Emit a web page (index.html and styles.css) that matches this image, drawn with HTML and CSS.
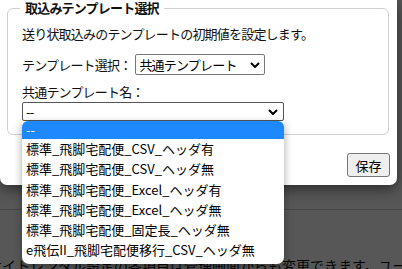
FILE: index.html
```html
<!DOCTYPE html>
<html lang="ja">
<head>
  <meta charset="UTF-8" />
  <meta name="viewport" content="width=device-width, initial-scale=1.0" />
  <title>取込みテンプレート選択</title>
  <link rel="stylesheet" href="styles.css">
</head>
<body>
  <!-- page behind the dialog -->
  <div class="page">
    <p class="page-line page-top">テンプレートの設定</p>
    <hr class="page-rule" />
    <p class="page-line page-bottom">サイトレンタル設定の各項目は管理画面からも変更できます。ユーザー</p>
  </div>
  <div class="overlay"></div>

  <div class="dialog">
    <fieldset class="group">
      <legend>取込みテンプレート選択</legend>
      <p class="note">送り状取込みのテンプレートの初期値を設定します。</p>

      <div class="row">
        <label for="tplType">テンプレート選択：</label>
        <span class="select-wrap">
          <select id="tplType" class="select">
            <option>共通テンプレート</option>
          </select>
          <svg class="chevron" viewBox="0 0 10 6" width="10" height="6"><path d="M1 1l4 4 4-4" fill="none" stroke="#000" stroke-width="2"/></svg>
        </span>
      </div>

      <label class="field-label" for="tplName">共通テンプレート名：</label>
      <span class="select-wrap wide">
        <select id="tplName" class="select">
          <option>--</option>
        </select>
        <svg class="chevron" viewBox="0 0 10 6" width="10" height="6"><path d="M1 1l4 4 4-4" fill="none" stroke="#000" stroke-width="2"/></svg>
      </span>
    </fieldset>

    <div class="actions">
      <button type="button" class="save-btn">保存</button>
    </div>
  </div>

  <!-- open list of the name select -->
  <ul class="dropdown">
    <li class="selected">--</li>
    <li>標準_飛脚宅配便_CSV_ヘッダ有</li>
    <li>標準_飛脚宅配便_CSV_ヘッダ無</li>
    <li>標準_飛脚宅配便_Excel_ヘッダ有</li>
    <li>標準_飛脚宅配便_Excel_ヘッダ無</li>
    <li>標準_飛脚宅配便_固定長_ヘッダ無</li>
    <li>e飛伝II_飛脚宅配便移行_CSV_ヘッダ無</li>
  </ul>
</body>
</html>
```

FILE: styles.css
```css
body {
  font-family: "Noto Sans CJK JP", "Noto Sans", sans-serif;
  font-size: 13px;
  margin: 0;
  width: 402px;
  height: 269px;
  overflow: hidden;
  position: relative;
  background: #fff;
  color: #111;
  letter-spacing: -0.8px;
}
.page {
  padding-top: 182px;
  height: 269px;
  box-sizing: border-box;
  overflow: hidden;
}
.page-line {
  margin: 0;
  white-space: nowrap;
  line-height: 18px;
}
.page-top {
  margin-left: -120px;
}
.page-rule {
  border: none;
  border-top: 1px solid #ccc;
  margin: 9px 0 0;
}
.page-bottom {
  margin-top: 46px;
  margin-left: -12px;
  font-size: 14px;
  letter-spacing: 0;
}
.overlay {
  position: absolute;
  inset: 0;
  background: rgba(0, 0, 0, 0.66);
}
.dialog {
  position: absolute;
  left: 0;
  top: 0;
  width: 397px;
  height: 185px;
  background: #fff;
  border-radius: 0 0 7px 7px;
  box-shadow: 0 4px 14px rgba(0, 0, 0, 0.5);
}
.group {
  margin: 0 8px 0 7px;
  padding: 9px 14px 13px;
  border: 1px solid #d0d0d0;
  border-radius: 6px;
}
.group legend {
  font-weight: bold;
  padding: 0 5px;
  margin-left: -2px;
  line-height: 16px;
}
.note {
  margin: 0 0 11px;
  line-height: 18px;
}
.row {
  display: flex;
  align-items: center;
  gap: 4px;
  margin-bottom: 9px;
}
.select-wrap {
  position: relative;
  display: inline-block;
}
.select-wrap.wide {
  display: block;
  width: 262px;
  margin-top: 2px;
}
.select {
  display: block;
  appearance: none;
  font: inherit;
  letter-spacing: inherit;
  color: #000;
  background: #fff;
  border: 1px solid #767676;
  border-radius: 2px;
  height: 21px;
  padding: 0 20px 0 3px;
  line-height: 19px;
  width: 130px;
}
.wide .select {
  width: 262px;
  height: 19px;
  line-height: 17px;
  border-color: #555;
}
.chevron {
  position: absolute;
  right: 5px;
  top: 8px;
  pointer-events: none;
}
.wide .chevron {
  top: 7px;
  right: 6px;
}
.field-label {
  display: block;
  line-height: 16px;
}
.actions {
  display: flex;
  justify-content: flex-end;
  padding: 18px 7px 0 0;
}
.save-btn {
  font: inherit;
  font-size: 13px;
  letter-spacing: 0;
  width: 43px;
  height: 24px;
  padding: 0;
  background: #efefef;
  border: 1px solid #767676;
  border-radius: 3px;
  color: #000;
}
.dropdown {
  position: absolute;
  left: 22px;
  top: 121px;
  width: 262px;
  height: 143px;
  box-sizing: border-box;
  margin: 0;
  padding: 0;
  list-style: none;
  background: #fff;
  border-radius: 0 0 7px 7px;
  box-shadow: 0 3px 8px rgba(0, 0, 0, 0.35);
  overflow: hidden;
  letter-spacing: 0;
}
.dropdown li {
  height: 20.3px;
  line-height: 20px;
  padding-left: 4px;
  white-space: nowrap;
  color: #000;
}
.dropdown li.selected {
  background: #1e88ff;
  color: #fff;
  border-radius: 6px 6px 0 0;
  height: 18px;
  line-height: 18px;
}
```
